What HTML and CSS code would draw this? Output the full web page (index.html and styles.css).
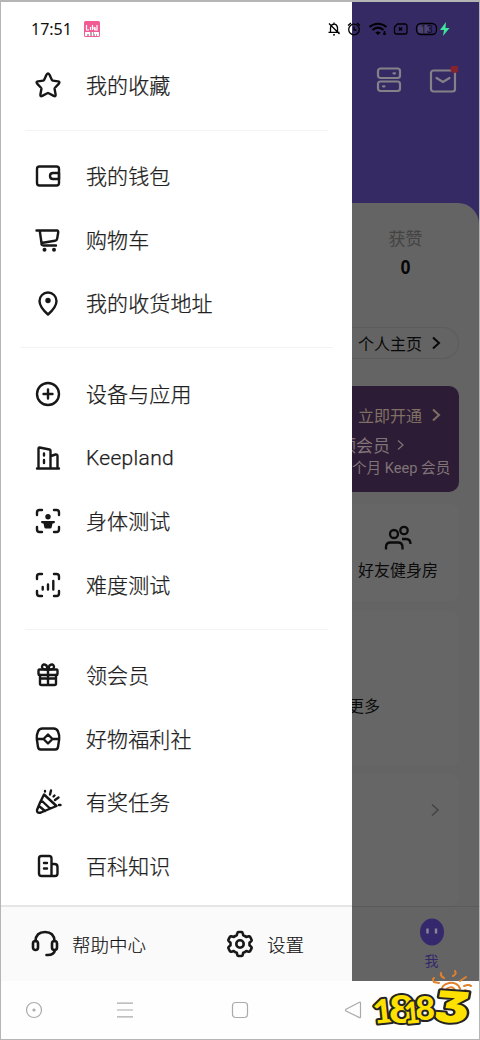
FILE: index.html
```html
<!DOCTYPE html>
<html lang="zh-CN">
<head>
<meta charset="utf-8">
<title>Keep</title>
<link rel="stylesheet" href="styles.css">
</head>
<body>
<div class="phone">
  <div class="status">
    <span class="time">17:51</span>
    <svg class="app" width="16" height="16" viewBox="0 0 16 16"><rect width="16" height="16" rx="1.5" fill="#f25c94"/><path d="M1 11h14v4H1z" fill="#fff"/><path d="M2.500 4v5h2.500M6.500 6v3M8.500 4v5M8.500 7h2v2M13 4v5h-2V6" stroke="#fff" stroke-width="1.200" fill="none"/><path d="M3 14h10M6 12h4" stroke="#846" stroke-dasharray="2 1"/></svg>
    <svg class="signals" width="126" height="18" viewBox="0 0 126 18" fill="none" stroke="#000" stroke-width="1.300">
      <path d="M3.500 12V8.500c0-5 6-6 7-1v4.500M1.500 12.300h11M2 3.500l10.500 10.500M6 14.800h2M7 2.500v2"/>
      <circle cx="27" cy="9.500" r="5.300"/><path d="M27 6.500v3.500h2.500M21 5.500l3-2.500M33 5.500l-3-2.500"/>
      <path d="M42.500 7c5-4.500 12-4.500 17 0M45.500 10c3.500-3 7.500-3 11 0" stroke-width="2"/><path d="M48.300 12.500q2.700-2 5.400 0L51 15z" fill="#000" stroke="none"/><path d="M56 14h3M57.500 11v4" stroke-width="1.600"/>
      <path d="M70.500 4h7.500q2 0 2 2v6q0 2-2 2h-8.500q-2 0-2-2V7z"/><path d="m72 7.500 3 3m0-3-3 3" stroke-width="1.600"/>
      <rect x="89.500" y="3.500" width="20" height="11" rx="4.500"/><rect x="91" y="5" width="11" height="8" rx="3" fill="#6a6389" fill-opacity=".45" stroke="none"/>
      <text x="93.500" y="13" class="battery">13</text>
      <path d="m119 2-6 8h4l-1 6 6.500-8h-4z" fill="#3ee59c" stroke="none"/>
    </svg>
  </div>

  <main class="screen">
    <aside class="drawer">
      <nav class="menu">
        <a class="row"><svg class="ico" viewBox="0 0 28 28"><path d="M12.600 3.600q1.400-2.400 2.800 0l2.400 5.200q.3.700 1 .8l5.300.8q2.200.5.800 2.200l-3.900 4.200q-.5.500-.4 1.200l1 5.400q.3 2.500-1.900 1.500l-5-2.700q-.7-.4-1.400 0l-5 2.700q-2.200 1-1.900-1.500l1-5.400q.1-.7-.4-1.200l-3.900-4.200q-1.400-1.700.8-2.200l5.300-.8q.7-.1 1-.8z"/></svg><span>我的收藏</span></a>
        <hr class="rule inset">
        <a class="row"><svg class="ico" viewBox="0 0 28 28"><rect x="3" y="4.500" width="22" height="19" rx="2.500"/><path d="M25 11h-6q-3 0-3 3t3 3h6z"/></svg><span>我的钱包</span></a>
        <a class="row"><svg class="ico" viewBox="0 0 28 28"><path d="M2.500 4.500h20.500q1.500 0 1.200 2l-1 6q-.3 2-2.200 2.300L7.500 17 5.800 5M7.500 17q-.5 2.500 2 2.500H22"/><g class="solid"><circle cx="10.500" cy="23.800" r="2"/><circle cx="20" cy="23.800" r="2"/></g></svg><span>购物车</span></a>
        <a class="row"><svg class="ico" viewBox="0 0 28 28"><path d="M14 25.500C10 22 5.500 17.500 5.500 12a8.500 8.500 0 0 1 17 0c0 5.500-4.500 10-8.500 13.500z"/><circle class="solid" cx="14" cy="11.500" r="2.700"/></svg><span>我的收货地址</span></a>
        <hr class="rule">
        <a class="row"><svg class="ico" viewBox="0 0 28 28"><circle cx="14" cy="14" r="11"/><path d="M14 9.500v9M9.500 14h9"/></svg><span>设备与应用</span></a>
        <a class="row latin"><svg class="ico" viewBox="0 0 28 28"><path d="M3 24.500h22M4.500 24.500V4.500q0-1 1-1l10 2q1 .2 1 1.300v17.700M17 12l4.500-1.500q2-.4 2 1.500v12.500M10 9.500v2M10 16v3"/></svg><span>Keepland</span></a>
        <a class="row"><svg class="ico" viewBox="0 0 28 28"><path d="M3 8V5.500Q3 3 5.500 3H8M20 3h2.500Q25 3 25 5.500V8M25 20v2.500q0 2.500-2.500 2.500H20M8 25H5.500Q3 25 3 22.500V20"/><g class="solid"><circle cx="14" cy="9.800" r="2.700"/><path d="M8 14h12q1 0 1 1t-1 1.200l-1.500.3-.8 3.700q-.3 1.300-1.500 1.300h-4.400q-1.200 0-1.500-1.300l-.8-3.700-1.500-.3Q7 16 7 15t1-1z"/></g></svg><span>身体测试</span></a>
        <a class="row"><svg class="ico" viewBox="0 0 28 28"><path d="M3 8V5.500Q3 3 5.500 3H8M20 3h2.500Q25 3 25 5.500V8M25 20v2.500q0 2.500-2.500 2.500H20M8 25H5.500Q3 25 3 22.500V20M8.700 16v2.500M14 13.500v5M19.300 10v8.500"/></svg><span>难度测试</span></a>
        <hr class="rule inset">
        <a class="row"><svg class="ico" viewBox="0 0 28 28"><rect x="4.500" y="8.500" width="19" height="5.500" rx="1"/><path d="M6 14v8.500q0 1.500 1.500 1.500h13q1.500 0 1.500-1.500V14M14 8v16M14 8.500Q7.500 9 8 5.500 9 2 12.500 4.500L14 8.500l1.500-4Q19 2 20 5.500q.5 3.500-6 3M6 17.500h16"/></svg><span>领会员</span></a>
        <a class="row"><svg class="ico" viewBox="0 0 28 28"><path d="M8.500 3.500h11q3.300 0 4.500 3 1.700 4 1.200 7.500L24 22q-.4 2.500-2.700 2.500H6.700Q4.400 24.500 4 22l-1.200-8Q2.300 10.500 4 6.500q1.200-3 4.500-3zM3 14h6.500M18.500 14H25M14 9.500l4.500 4.500-4.500 4.500L9.500 14z"/></svg><span>好物福利社</span></a>
        <a class="row"><svg class="ico" viewBox="0 0 28 28"><path d="M10 6.500 22.500 18Q14 21.500 7 24.500q-4.500 1.200-4-2.500Q6 14 10 6.500zM7.500 12.500l8.500 8M5 18l6 5M16 6.500l1-4M19.500 8.500l1-1M21 12l3.500-2.500M25 17h1.500M11 3v.5"/></svg><span>有奖任务</span></a>
        <a class="row"><svg class="ico" viewBox="0 0 28 28"><path d="M17.500 24h-10Q5 24 5 21.500v-15Q5 4 7.500 4h7.500Q17.500 4 17.500 6.500V24h3.500q2.500 0 2.500-2.500V15q0-3-3-3h-3M10 11h3M10 16.500h3"/></svg><span>百科知识</span></a>
      </nav>
      <footer class="foot">
        <a class="action"><svg class="ico big" viewBox="0 0 28 28"><rect x="2" y="11" width="5" height="9" rx="2.500"/><rect x="21" y="11" width="5" height="9" rx="2.500"/><path d="M4.500 11Q5 2 14 2t9.500 9M24 20q-1 5.500-8.500 5"/></svg><span>帮助中心</span></a>
        <a class="action"><svg class="ico big" viewBox="0 0 28 28"><path d="M12.500 2h3q1 0 1.200 1l.5 2.200q1.800.6 3.100 1.800l2.300-.7q1-.2 1.500.6l1.400 2.600q.5.900-.2 1.600L23.500 12.800v2.400l1.800 1.700q.7.700.2 1.600l-1.400 2.600q-.5.800-1.500.6l-2.300-.7q-1.300 1.200-3.100 1.800l-.5 2.200q-.2 1-1.200 1h-3q-1 0-1.200-1l-.5-2.200q-1.800-.6-3.100-1.800l-2.300.7q-1 .2-1.500-.6l-1.400-2.600q-.5-.9.200-1.600l1.800-1.700v-2.400l-1.800-1.700q-.7-.7-.2-1.600l1.400-2.600q.5-.8 1.500-.6l2.300.7q1.300-1.200 3.100-1.800l.5-2.200q.2-1 1.200-1z"/><circle cx="14" cy="14" r="3.700"/></svg><span>设置</span></a>
      </footer>
    </aside>

    <section class="page">
      <header class="top">
        <svg width="28" height="28" viewBox="0 0 28 28"><rect x="3" y="2.500" width="22" height="9.500" rx="2.500"/><rect x="3" y="15.500" width="22" height="9.500" rx="2.500"/><path d="M18.500 7.300h1.500M8 20.300h1.500"/></svg>
        <svg width="30" height="30" viewBox="0 0 30 30"><rect x="3" y="4.500" width="24" height="21" rx="2.500"/><path d="m8.500 12 6.500 4 6.500-4"/><circle cx="26.500" cy="3" r="4" fill="#87232e" stroke="none"/></svg>
      </header>
      <div class="sheet">
        <div class="stat"><span class="label">获赞</span><b class="count">0</b></div>
        <div class="pill">个人主页<svg class="chev" viewBox="0 0 10 14"><path d="m1 1.500 6 5.500-6 5.500"/></svg></div>
        <div class="vip">
          <div class="line gold">立即开通<svg class="chev" viewBox="0 0 10 14"><path d="m1 1.500 6 5.500-6 5.500"/></svg></div>
          <div class="line offer">领会员<svg class="chev thin" viewBox="0 0 10 14"><path d="m1 2.500 5 4.500-5 4.500"/></svg></div>
          <div class="line months">个月 Keep 会员</div>
        </div>
        <div class="card friends">
          <svg width="28" height="26" viewBox="0 0 28 26"><circle cx="10" cy="9" r="4"/><path d="M2 24.500V22q0-4.500 4.500-4.500H14q4.500 0 4.500 4.500v2.500"/><circle cx="20" cy="5.500" r="3.700"/><path d="M18 14h4q4.500 0 4.500 5"/></svg>
          好友健身房
        </div>
        <div class="card more"><span>更多</span></div>
        <div class="card last"><svg class="chev" viewBox="0 0 10 14"><path d="m1 1.500 6 5.500-6 5.500"/></svg></div>
      </div>
      <div class="tab"><div class="me"><svg width="26" height="28" viewBox="0 0 26 28"><ellipse cx="13" cy="14" rx="12" ry="13.500" fill="#35286d"/><path d="M8.500 10.500v5M17 10.500v5" stroke="#8a8796" stroke-width="2.400"/></svg>我</div></div>
    </section>
  </main>

  <footer class="sysnav">
    <svg width="18" height="18" viewBox="0 0 18 18"><circle cx="9" cy="9" r="7.500"/><circle cx="9" cy="9" r="1" fill="#aaa"/></svg>
    <svg width="18" height="18" viewBox="0 0 18 18"><path d="M1 2.200h16M1 9h16M1 15.800h16"/></svg>
    <svg width="18" height="18" viewBox="0 0 18 18"><rect x="1.500" y="1.500" width="15" height="15" rx="3"/></svg>
    <svg width="18" height="18" viewBox="0 0 18 18"><path d="M16.500 2v14q0 1-1 .6L2 10Q.8 9 2 8.200l13.500-7q1-.4 1 .8z"/></svg>
  </footer>

  <svg class="brand" width="112" height="70" viewBox="0 0 112 70">
    <g fill="none" stroke="#e0812b" stroke-width="2" stroke-linecap="round"><path d="M73 22c-3-10 16-13 18-3M77 22c0-6 9-6 9-1M70 13l-5-1q-2-3 0-4M75 8q-4-2-3-5M84 6q4-2 2-5M91 11l6-4M95 16q5-2 7 0M96 20l5 2"/></g>
    <g class="digits">
      <text transform="translate(5 54) rotate(-6) scale(1.050 1)" font-size="33">1</text>
      <text transform="translate(20 53) scale(1.150 1)" font-size="38">8</text>
      <text class="flat" transform="translate(62 51) rotate(4) skewX(-6) scale(1.250 1)" font-size="43">3</text>
      <text transform="translate(46 50) scale(1.080 1)" font-size="32">8</text>
      <text transform="translate(36 54) rotate(-5) scale(.9 1)" font-size="30">1</text>
    </g>
  </svg>
</div>
</body>
</html>
```
FILE: styles.css
```css
* { box-sizing: border-box; }
body { margin: 0; background: #fff; font-family: Roboto, "Noto Sans CJK SC", sans-serif; color: #222; }
.phone { position: relative; width: 480px; height: 1040px; border: 1px solid #b5b5b5; border-top-width: 2px; overflow: hidden; background: #fefefe; }
.status { position: absolute; z-index: 2; top: 17px; left: 0; width: 100%; height: 20px; display: flex; align-items: center; padding-left: 30px; }
.time { font: 16px "Noto Sans", sans-serif; letter-spacing: 0; width: 53px; color: #111; }
.signals { margin-left: 227px; }
.battery { font: 300 10.5px Roboto, sans-serif; fill: #000; stroke: none; letter-spacing: .5px; }
.screen { display: grid; grid-template-columns: 351px 1fr; height: 979px; }
.drawer { background: #fff; display: flex; flex-direction: column; }
.menu { flex: 1; padding-top: 51.7px; }
.row { display: flex; align-items: center; gap: 24px; height: 63.5px; padding-left: 33px; font-size: 21px; font-weight: 300; letter-spacing: .1px; color: #202020; white-space: nowrap; }
.row span { padding-bottom: 2px; -webkit-text-stroke: .25px #202020; }
.latin { letter-spacing: .3px; }
.latin span { padding: 1px 0 0; }
.ico { width: 28px; height: 28px; flex: none; fill: none; stroke: #171717; stroke-width: 2.4; stroke-linejoin: round; stroke-linecap: round; }
.solid { fill: #171717; stroke: none; }
.rule { border: 0; height: 1px; margin: 12.5px 19px 13.8px; background: #f3f3f3; }
.inset { margin-left: 24px; margin-right: 24px; }
.foot { height: 76px; border-top: 2px solid #e6e6e6; background: #fafafa; display: grid; grid-template-columns: 195px 1fr; padding-left: 30px; }
.action { display: flex; align-items: center; gap: 13px; font-size: 18.5px; font-weight: 300; color: #111; }
.action span { -webkit-text-stroke: .15px #111; }
.action .ico { stroke-width: 2.6; }
.page { background: #362a65; display: flex; flex-direction: column; overflow: hidden; }
.top { height: 201px; display: flex; align-items: flex-start; gap: 25px; padding: 64px 0 0 23px; }
.top svg { fill: none; stroke: #858189; stroke-width: 2.2; stroke-linecap: round; }
.sheet { flex: 1; background: #646464; border-top-right-radius: 21px; display: flex; flex-direction: column; padding-right: 20px; }
.stat { height: 124px; display: flex; flex-direction: column; align-items: center; padding-top: 24px; }
.label { font-size: 17px; line-height: 25px; color: #434343; }
.count { font: 600 20px "Liberation Sans", sans-serif; line-height: 30px; color: #050505; transform: scaleX(.9); }
.chev { width: 10px; height: 14px; fill: none; stroke: currentColor; stroke-width: 2; flex: none; }
.pill { height: 32px; border: 1px solid #5c5c5c; border-left: 0; border-radius: 0 16px 16px 0; display: flex; align-items: center; gap: 10px; padding-left: 6px; font-size: 16px; color: #090909; }
.stat, .pill, .vip, .card { flex-shrink: 0; }
.vip { height: 106px; margin-top: 27px; background: #2c1c35; border-radius: 0 10px 10px 0; padding-top: 14px; overflow: hidden; white-space: nowrap; }
.line { display: flex; align-items: center; }
.gold { height: 30px; gap: 10px; padding-left: 6px; font-size: 16px; color: #807064; }
.offer { height: 29px; gap: 7px; font-size: 17px; color: #817477; margin-left: -13px; }
.thin { stroke-width: 1.2; }
.months { height: 15px; font-size: 14.6px; color: #817477; }
.card { background: #666; border-radius: 0 8px 8px 0; }
.friends { height: 97px; margin-top: 12px; display: flex; flex-direction: column; align-items: center; gap: 8px; padding: 21px 15px 0 0; font-size: 16px; line-height: 24px; color: #0b0b0b; white-space: nowrap; }
.friends svg { fill: none; stroke: #0b0b0b; stroke-width: 2.3; }
.more { height: 155px; margin-top: 10px; padding-top: 84px; overflow: hidden; font-size: 16px; line-height: 24px; color: #0b0b0b; }
.more span { margin-left: -4px; }
.last { height: 132px; margin-top: 8px; padding: 28px 0 0 79px; color: #444; }
.last .chev { stroke-width: 1.5; }
.tab { height: 75px; background: #646464; border-top: 1px solid #5b5b5b; display: flex; justify-content: center; padding: 11px 0 0 32px; }
.me { display: flex; flex-direction: column; align-items: center; font-size: 14px; line-height: 30px; color: #33286a; }
.sysnav { height: 58px; background: #fefefe; display: grid; grid-template-columns: 91px 115px 113px 1fr; padding: 20px 0 0 24px; }
.sysnav svg { fill: none; stroke: #aaa; stroke-width: 1.2; }
.brand { position: absolute; z-index: 3; left: 368px; top: 968px; }
.digits { font-family: Lato, sans-serif; font-weight: 900; fill: #ffe100; stroke: #242424; stroke-width: 4px; stroke-linejoin: round; paint-order: stroke; }
.flat { font-family: Inter, Lato, sans-serif; font-feature-settings: "cv09"; }
```
